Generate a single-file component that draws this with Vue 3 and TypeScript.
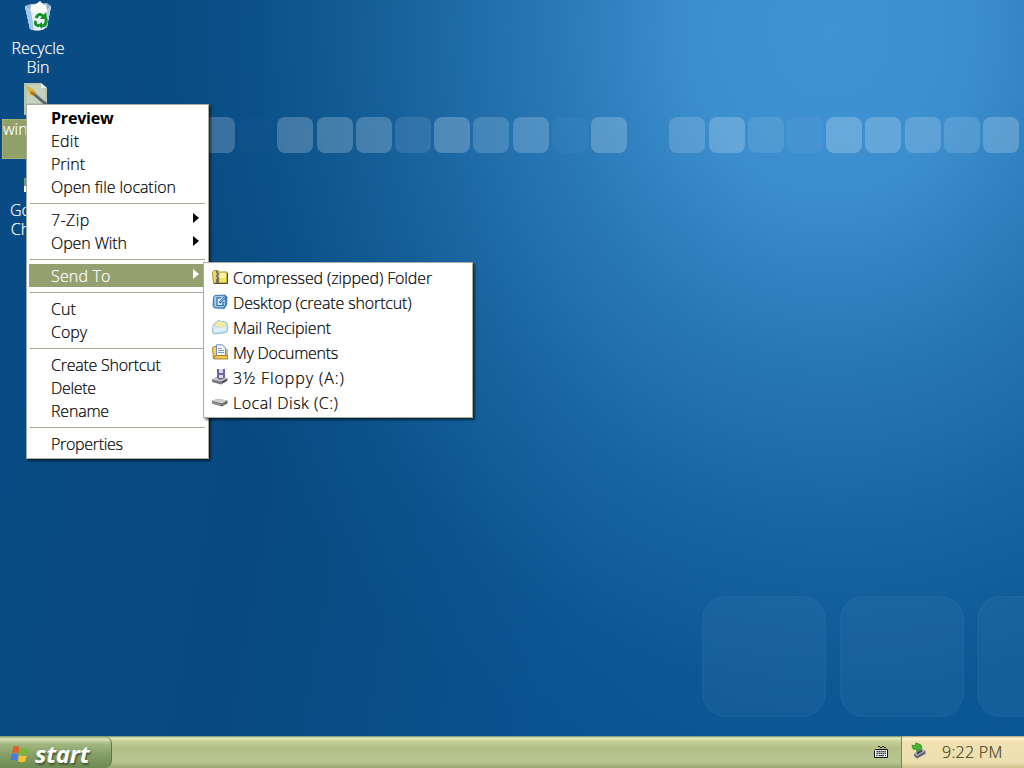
<template>
  <div class="desktop">
    <!-- wallpaper squares -->
    <span
      v-for="t in tiles"
      :key="t.x"
      class="tile"
      :style="{ left: t.x + 'px', opacity: t.o }"
    ></span>
    <span v-for="x in bigTiles" :key="x" class="big-tile" :style="{ left: x + 'px' }"></span>

    <div class="shortcut bin">
      <svg width="32" height="34" viewBox="0 0 32 34">
        <path d="M3 5 L29 5 L25 26 Q18 32 8 28 Z" fill="#dbe8f2" />
        <path d="M3 5 L8 3 L25 2 L29 5 L23 11 L9 10 Z" fill="#8fb3d4" />
        <path d="M8 10 L9 4 L14 3 L18 0 L22 4 L24 3 L25 10 L20 14 Z" fill="#fafcf4" />
        <path d="M3 6 L9 10 L16 12 L24 11 L29 5 L25 26 Q18 32 8 28 Z" fill="#eef5f9" opacity=".75" />
        <path d="M3 6 L8 28 L12 29 L9 10 Z" fill="#a2c6e4" />
        <path d="M29 5 L25 26 L22 28 L25 10 Z" fill="#b4d0e6" />
        <g fill="none" stroke="#169127" stroke-width="3">
          <path d="M14 17 Q17 11 21 15" />
          <path d="M24 18 Q25 24 20 25" />
          <path d="M17 25 Q12 24 14 20" />
        </g>
        <path d="M18 18 L25 18 L24 11 Z M20 21 L20 28 L16 24 Z" fill="#169127" />
      </svg>
      <span>Recycle<br />Bin</span>
    </div>

    <div class="shortcut picture">
      <svg width="24" height="32" viewBox="0 0 24 32">
        <path d="M0 0 H17 L23 5 V32 H0 Z" fill="#b4c6ae" />
        <path d="M3 2 H16 L21 7 V20 H3 Z" fill="#c6d2bd" />
        <path d="M17 0 V5 H23 Z" fill="#e6eee8" />
        <path d="M9 10 L23 22" stroke="#5b6170" stroke-width="3" />
        <path d="M11 10 L22 19" stroke="#a9b8c0" stroke-width="1" />
        <path d="M2 3 L8 5 L12 9 L10 13 L6 12 L4 8 Z" fill="#dcb340" />
        <path d="M7 9 L11 12" stroke="#a56b2a" stroke-width="2.500" />
      </svg>
      <span class="selected">win</span>
    </div>

    <div class="shortcut chrome">
      <i></i>
      <span>Go<br />Ch</span>
    </div>

    <ul class="menu main">
      <template v-for="(group, g) in menu" :key="g">
        <li v-if="g > 0" class="sep"></li>
        <li
          v-for="it in group"
          :key="it.label"
          class="item"
          :class="{ bold: it.bold, active: it.active }"
        >
          <span :style="{ letterSpacing: (it.ls ?? 0) + 'px' }">{{ it.label }}</span>
          <svg v-if="it.sub" class="arrow" width="6" height="10" viewBox="0 0 6 10">
            <path d="M0 0 L6 5 L0 10 Z" fill="currentColor" />
          </svg>
        </li>
      </template>
    </ul>

    <ul class="menu sub">
      <li v-for="it in sendTo" :key="it.label" class="item">
        <svg v-if="it.icon === 'zip'" width="16" height="16" viewBox="0 0 16 16">
          <path d="M.5 3.500 L2 1.500 H6 L7 3 H15 V14 H1.500 Z" fill="#f1e264" stroke="#a59127" />
          <path d="M8 4 H14 V9 H8 Z" fill="#fbf5a5" />
          <path d="M15.500 4 V14.500 H2" stroke="#4c4a25" fill="none" />
          <path d="M3.500 2 H7.500 V14 H3.500 Z" fill="#c9c499" />
          <path d="M4 3 H6 M5 5 H7 M4 7 H6 M5 9 H7 M4 11 H7 M4 13 H7" stroke="#222" stroke-width="1.200" />
        </svg>
        <svg v-else-if="it.icon === 'desktop'" width="16" height="16" viewBox="0 0 16 16">
          <path d="M3 1 L13 .5 L15.500 3 L15 11 L12.500 15 L2.500 14.500 L.5 12 L1 3 Z" fill="#447fb5" />
          <path d="M3 2 L12.500 1.800 L13 11 L11 13.500 L2.500 13 L2 4 Z" fill="#9fd0f4" />
          <path d="M5 4 H10 V11.500 H5 Z" fill="#e4f4ff" />
          <path d="M9 3.800 H5 V11.500 H11 V8" stroke="#2767b4" stroke-width="1.200" fill="none" />
          <path d="M7.500 9 L13 3" stroke="#1c5ca4" stroke-width="2.200" />
          <path d="M8.500 8 L13 3" stroke="#eef7ff" stroke-width=".8" />
        </svg>
        <svg v-else-if="it.icon === 'mail'" width="16" height="16" viewBox="0 0 16 16">
          <path d="M1 6 L6 1.500 L14 3 L15.500 6 V12 L13 14 L1.500 15 L.5 13 Z" fill="#b4d9ee" stroke="#86aabe" stroke-width=".7" />
          <path d="M2 6 L6.500 2 L13.500 3.500 L14.500 6 L9 9 Z" fill="#f3e9a0" />
          <path d="M1 7 Q9 11 15 6.500 L14 12 L2 14 Z" fill="#d9f0fa" />
        </svg>
        <svg v-else-if="it.icon === 'docs'" width="16" height="16" viewBox="0 0 16 16">
          <path d="M.5 4 L2 2.500 H5 V14.500 H1.500 Z" fill="#f3d25d" stroke="#a98221" />
          <path d="M4.500 .8 H10.500 L13.500 4 V12 H4.500 Z" fill="#f3f8ff" stroke="#6f8cc4" />
          <path d="M6 4.500 H10 M6 6.500 H12 M6 8.500 H12" stroke="#7b9bd2" />
          <path d="M3 11.500 H15.500 V15 H2 Z" fill="#f0c94e" stroke="#94701d" stroke-width=".8" />
          <path d="M15 5 V12" stroke="#94701d" />
        </svg>
        <svg v-else-if="it.icon === 'floppy'" width="16" height="16" viewBox="0 0 16 16">
          <path d="M0 10.500 L5 8 L15.500 9 V12 L9 15.500 L0 13 Z" fill="#77787e" />
          <path d="M0 10.500 L5 8 L15.500 9 L9 12.500 Z" fill="#c9cace" />
          <path d="M5 0 H13 V9 L8 11 L5 9 Z" fill="#6a66a0" />
          <path d="M7 0 H11 V4 H7 Z M7 6 H11 V9 H7 Z" fill="#d8d8ea" />
          <path d="M10 13.500 L14.500 11" stroke="#333" />
        </svg>
        <svg v-else width="16" height="16" viewBox="0 0 16 16">
          <path d="M0 7 L5 5 L15.500 6.500 V9.500 L10 12.500 L0 9.500 Z" fill="#606163" />
          <path d="M0 7 L5 5 L15.500 6.500 L10 9.500 Z" fill="#cfcfcf" />
          <path d="M0 7.500 L9.500 10 V12 L0 9.500 Z" fill="#8d8e90" />
          <circle cx="12" cy="10" r=".7" fill="#8ad24e" />
        </svg>
        <span :style="{ letterSpacing: (it.ls ?? 0) + 'px' }">{{ it.label }}</span>
      </li>
    </ul>

    <footer class="taskbar">
      <div class="start">
        <svg width="20" height="18" viewBox="0 0 20 18">
          <path d="M3.500 1.500 Q6.500 .3 9.500 2 L8.300 8.300 Q5 6.800 2 8 Z" fill="#e0602c" />
          <path d="M10.700 2.500 Q14 4.200 18.500 2.800 L17 9.200 Q13 10.500 9.500 8.800 Z" fill="#79b836" />
          <path d="M1.700 9 Q5 7.900 8 9.500 L6.900 15.800 Q3.500 14.300 .4 15.300 Z" fill="#4a7be0" />
          <path d="M9.200 10 Q13 11.600 16.700 10.400 L15.300 16.600 Q11.500 18 8 16.300 Z" fill="#f3c32c" />
        </svg>
        <span>start</span>
      </div>
      <svg class="keyboard" width="14" height="14" viewBox="0 0 14 14">
        <path d="M4 1.500 H6 M6 2.500 H8 M8 1.500 H10 M10 2.500 H12" stroke="#222" />
        <path d="M1.500 4.500 H13.500 V12.500 H.5 V5.500 Z" fill="#fff" stroke="#111" />
        <path d="M2.500 6.500 H12 M2.500 8.500 H12" stroke="#111" stroke-width="1.400" stroke-dasharray="1.300 .7" />
        <path d="M2 10.700 H3.500 M4.500 10.700 H10 M11 10.700 H12" stroke="#111" />
      </svg>
      <div class="tray">
        <svg width="16" height="17" viewBox="0 0 16 17">
          <path d="M3 12 L10 6.500 L14.500 9 V12 L6 16.500 L3 14 Z" fill="#666a78" />
          <path d="M3 12 L10 6.500 L14.500 9 L6 14 Z" fill="#a4a8b4" />
          <path d="M6 11.500 L11 8.500" stroke="#3f424b" stroke-width="2" />
          <path d="M1 3 L4 4 L5 .8 L10 3 L11 6 L8 8.500 L6 10 L5.500 7.500 L2 7 Z" fill="#46b532" stroke="#267d1e" stroke-width=".7" />
        </svg>
        <span class="clock">9:22 PM</span>
      </div>
    </footer>
  </div>
</template>

<script setup lang="ts">
interface MenuItem {
  label: string
  bold?: boolean
  active?: boolean
  sub?: boolean
  icon?: string
  ls?: number // letter-spacing in px
}

const menu: MenuItem[][] = [
  [
    { label: 'Preview', bold: true, ls: -0.2 },
    { label: 'Edit', ls: 0.25 },
    { label: 'Print' },
    { label: 'Open file location', ls: -0.06 }
  ],
  [{ label: '7-Zip', sub: true, ls: 0.4 }, { label: 'Open With', sub: true, ls: -0.1 }],
  [{ label: 'Send To', sub: true, active: true, ls: 0.15 }],
  [{ label: 'Cut' }, { label: 'Copy' }],
  [
    { label: 'Create Shortcut', ls: -0.25 },
    { label: 'Delete', ls: -0.3 },
    { label: 'Rename', ls: -0.2 }
  ],
  [{ label: 'Properties', ls: -0.3 }]
]

const sendTo: MenuItem[] = [
  { label: 'Compressed (zipped) Folder', icon: 'zip', ls: -0.12 },
  { label: 'Desktop (create shortcut)', icon: 'desktop', ls: -0.14 },
  { label: 'Mail Recipient', icon: 'mail', ls: -0.14 },
  { label: 'My Documents', icon: 'docs', ls: -0.27 },
  { label: '3½ Floppy (A:)', icon: 'floppy', ls: 0.9 },
  { label: 'Local Disk (C:)', icon: 'disk', ls: 0.48 }
]

// row of small squares, 39.2px apart; 0 leaves a gap
const strip = [0.22, 0.01, 0.24, 0.24, 0.23, 0.12, 0.25, 0.18, 0.22, 0.03, 0.24, 0, 0.18, 0.24, 0.12, 0.05, 0.25, 0.24, 0.2, 0.16, 0.23]
const tiles = strip.map((o, i) => ({ x: Math.round(199 + i * 39.2), o }))
const bigTiles = [702, 840, 977]
</script>

<style>
body {
  margin: 0;
  overflow: hidden;
}
</style>

<style scoped>
.desktop {
  position: relative;
  width: 1024px;
  height: 768px;
  overflow: hidden;
  font-family: 'Open Sans', 'DejaVu Sans', sans-serif;
  font-size: 16px;
  font-weight: 300;
  background:
    radial-gradient(ellipse 680px 780px at 830px 30px, #4093d2 0%, rgba(62, 145, 208, 0.96) 20%, rgba(46, 126, 188, 0.85) 42%, rgba(34, 112, 172, 0.6) 64%, rgba(16, 92, 152, 0.35) 85%, rgba(10, 84, 146, 0) 100%),
    linear-gradient(100deg, #094b84, #084a80 30%, #0a5392 60%, #0a5694);
}
.tile {
  position: absolute;
  top: 117px;
  width: 36px;
  height: 36px;
  border-radius: 8px;
  background: #e8f2fc;
}
.big-tile {
  position: absolute;
  top: 596px;
  width: 124px;
  height: 121px;
  border-radius: 24px;
  background: rgba(90, 150, 200, 0.12);
  box-shadow: inset 0 0 3px rgba(120, 180, 220, 0.15);
}

.shortcut {
  position: absolute;
  display: flex;
  flex-direction: column;
  align-items: center;
  color: #fff;
  line-height: 19px;
  text-align: center;
  -webkit-text-stroke: 0.2px;
}
.bin { left: 0; top: 1px; width: 76px; }
.bin span { margin-top: 4px; }
.picture { left: 2px; top: 83px; width: 72px; align-items: flex-start; }
.picture svg { margin-left: 22px; }
.selected {
  box-sizing: border-box;
  width: 70px;
  height: 40px;
  margin-top: 4px;
  padding: 1px;
  text-align: left;
  background: #91a069;
  outline: 1px dotted #c3ba80;
  outline-offset: -1px;
}
.chrome { left: 10px; top: 168px; align-items: flex-start; }
.chrome i { width: 4px; height: 14px; margin: 10px 0 9px 14px; background: linear-gradient(#6c9a86 60%, #fff 60%); }

.menu {
  position: absolute;
  box-sizing: border-box;
  margin: 0;
  list-style: none;
  background: #fff;
  border: 1px solid #a9ab9c;
  color: #000;
  box-shadow: 2px 2px 2px rgba(0, 0, 0, 0.55);
  -webkit-text-stroke: 0.2px;
}
.main { left: 26px; top: 104px; width: 183px; height: 355px; padding: 1px 2px 2px; }
.sub { left: 203px; top: 262px; width: 270px; height: 156px; padding: 2px; }
.item {
  display: flex;
  align-items: center;
  white-space: nowrap;
}
.main .item { height: 23px; padding: 0 7px 0 22px; }
.main .item .arrow { margin: 0 0 3px auto; }
.sub .item { height: 25px; gap: 5px; padding-left: 6px; }
.sub .item svg { margin-bottom: 2px; }
.bold { font-weight: 700; -webkit-text-stroke: 0; }
.active {
  background: #94a070;
  color: #fff;
}
.sep {
  height: 1px;
  margin: 5px 1px 4px;
  background: #aca899;
}

.taskbar {
  position: absolute;
  left: 0;
  right: 0;
  bottom: 0;
  height: 32px;
  display: flex;
  align-items: center;
  background: linear-gradient(#6f8a66 0, #e6ecc0 2px, #c8d09c 5px, #b3be86 12px, #b9c592 26px, #98a670 32px);
}
.start {
  box-sizing: border-box;
  width: 112px;
  height: 32px;
  display: flex;
  align-items: center;
  gap: 5px;
  padding: 4px 0 0 10px;
  border-radius: 0 8px 8px 0;
  border-right: 1px solid #5c7547;
  background: linear-gradient(#7d9468 0, #d9e3b8 3px, #a3b680 8px, #86a069 18px, #6d8a53 32px);
  color: #fff;
  font: italic 700 24px/28px 'Open Sans', sans-serif;
  letter-spacing: -0.2px;
  text-shadow: 1px 2px 2px #45552f;
}
.keyboard { margin-left: auto; margin-right: 13px; }
.tray {
  box-sizing: border-box;
  width: 123px;
  height: 32px;
  display: flex;
  align-items: center;
  gap: 15px;
  padding-left: 9px;
  border-left: 1px solid #7c8458;
  background: linear-gradient(#a09a70 0, #fff3cf 2px, #efe1b2 6px, #ecdfb0 26px, #cfc08c 32px);
  color: #45411c;
}
.tray svg { margin-bottom: 3px; }
.clock { letter-spacing: 0.3px; -webkit-text-stroke: 0.2px; }
</style>
